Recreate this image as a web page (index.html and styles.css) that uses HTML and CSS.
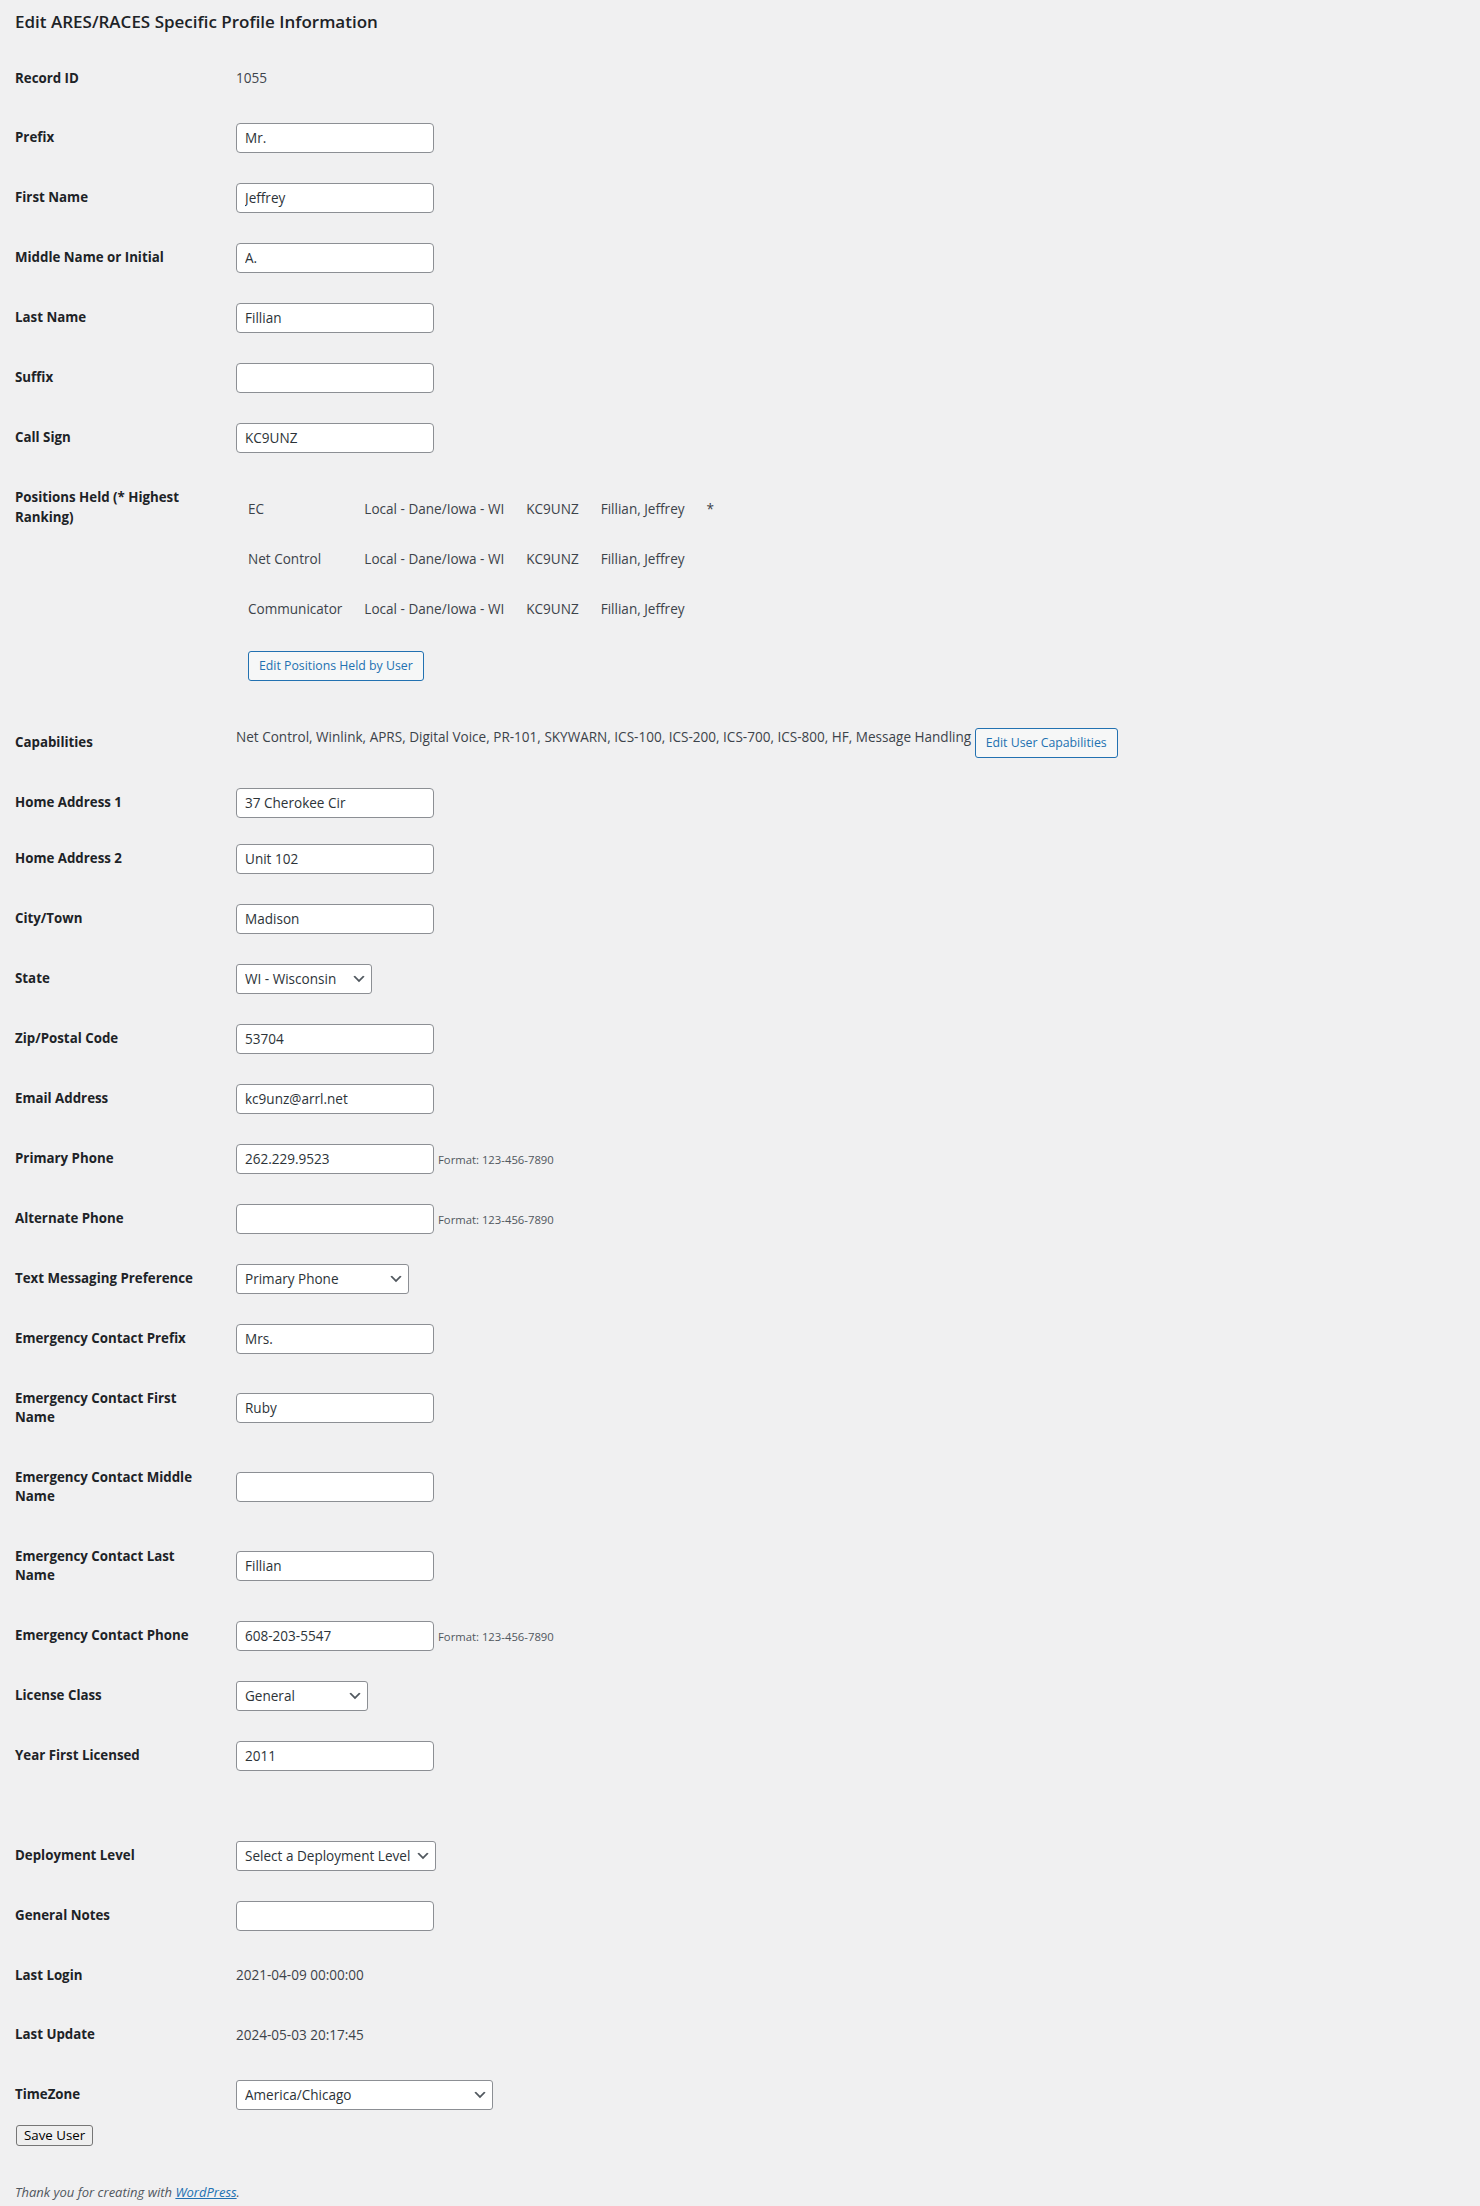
FILE: index.html
```html
<!DOCTYPE html>
<html lang="en">
<head>
<meta charset="utf-8">
<title>Edit ARES/RACES Specific Profile Information</title>
<link rel="stylesheet" href="styles.css">
</head>
<body>
<div class="wrap">
  <h2 class="page-title">Edit ARES/RACES Specific Profile Information</h2>
  <form>
  <table class="form-table">
    <tbody>
      <tr><th>Record ID</th><td>1055</td></tr>
      <tr><th>Prefix</th><td><input class="text-input" type="text" value="Mr."></td></tr>
      <tr><th>First Name</th><td><input class="text-input" type="text" value="Jeffrey"></td></tr>
      <tr><th>Middle Name or Initial</th><td><input class="text-input" type="text" value="A."></td></tr>
      <tr><th>Last Name</th><td><input class="text-input" type="text" value="Fillian"></td></tr>
      <tr><th>Suffix</th><td><input class="text-input" type="text" value=""></td></tr>
      <tr><th>Call Sign</th><td><input class="text-input" type="text" value="KC9UNZ"></td></tr>
      <tr>
        <th>Positions Held (* Highest Ranking)</th>
        <td>
          <table class="positions">
            <tbody>
              <tr><td>EC</td><td>Local - Dane/Iowa - WI</td><td>KC9UNZ</td><td>Fillian, Jeffrey</td><td>*</td></tr>
              <tr><td>Net Control</td><td>Local - Dane/Iowa - WI</td><td>KC9UNZ</td><td>Fillian, Jeffrey</td><td></td></tr>
              <tr><td>Communicator</td><td>Local - Dane/Iowa - WI</td><td>KC9UNZ</td><td>Fillian, Jeffrey</td><td></td></tr>
              <tr><td colspan="5"><button type="button" class="button">Edit Positions Held by User</button></td></tr>
            </tbody>
          </table>
        </td>
      </tr>
      <tr><th>Capabilities</th><td>Net Control, Winlink, APRS, Digital Voice, PR-101, SKYWARN, ICS-100, ICS-200, ICS-700, ICS-800, HF, Message Handling <button type="button" class="button">Edit User Capabilities</button></td></tr>
      <tr class="row-short"><th>Home Address 1</th><td><input class="text-input" type="text" value="37 Cherokee Cir"></td></tr>
      <tr><th>Home Address 2</th><td><input class="text-input" type="text" value="Unit 102"></td></tr>
      <tr><th>City/Town</th><td><input class="text-input" type="text" value="Madison"></td></tr>
      <tr><th>State</th><td><span class="select-wrap"><select class="select sel-state"><option>WI - Wisconsin</option></select><svg class="chev" viewBox="0 0 20 20" aria-hidden="true"><path d="M5 6l5 5 5-5 2 1-7 7-7-7 2-1z"/></svg></span></td></tr>
      <tr><th>Zip/Postal Code</th><td><input class="text-input" type="text" value="53704"></td></tr>
      <tr><th>Email Address</th><td><input class="text-input" type="text" value="kc9unz@arrl.net"></td></tr>
      <tr><th>Primary Phone</th><td><input class="text-input" type="text" value="262.229.9523"><span class="hint">Format: 123-456-7890</span></td></tr>
      <tr><th>Alternate Phone</th><td><input class="text-input" type="text" value=""><span class="hint">Format: 123-456-7890</span></td></tr>
      <tr><th>Text Messaging Preference</th><td><span class="select-wrap"><select class="select sel-text"><option>Primary Phone</option><option>Alternate Phone</option></select><svg class="chev" viewBox="0 0 20 20" aria-hidden="true"><path d="M5 6l5 5 5-5 2 1-7 7-7-7 2-1z"/></svg></span></td></tr>
      <tr><th>Emergency Contact Prefix</th><td><input class="text-input" type="text" value="Mrs."></td></tr>
      <tr><th>Emergency Contact First Name</th><td><input class="text-input" type="text" value="Ruby"></td></tr>
      <tr><th>Emergency Contact Middle Name</th><td><input class="text-input" type="text" value=""></td></tr>
      <tr><th>Emergency Contact Last Name</th><td><input class="text-input" type="text" value="Fillian"></td></tr>
      <tr><th>Emergency Contact Phone</th><td><input class="text-input" type="text" value="608-203-5547"><span class="hint">Format: 123-456-7890</span></td></tr>
      <tr><th>License Class</th><td><span class="select-wrap"><select class="select sel-license"><option>General</option><option>Technician</option><option>Extra</option></select><svg class="chev" viewBox="0 0 20 20" aria-hidden="true"><path d="M5 6l5 5 5-5 2 1-7 7-7-7 2-1z"/></svg></span></td></tr>
      <tr><th>Year First Licensed</th><td><input class="text-input" type="text" value="2011"></td></tr>
      <tr class="spacer"><th></th><td></td></tr>
      <tr><th>Deployment Level</th><td><span class="select-wrap"><select class="select sel-deploy"><option>Select a Deployment Level</option></select><svg class="chev" viewBox="0 0 20 20" aria-hidden="true"><path d="M5 6l5 5 5-5 2 1-7 7-7-7 2-1z"/></svg></span></td></tr>
      <tr><th>General Notes</th><td><input class="text-input" type="text" value=""></td></tr>
      <tr><th>Last Login</th><td>2021-04-09 00:00:00</td></tr>
      <tr><th>Last Update</th><td>2024-05-03 20:17:45</td></tr>
      <tr><th>TimeZone</th><td><span class="select-wrap"><select class="select sel-tz"><option>America/Chicago</option></select><svg class="chev" viewBox="0 0 20 20" aria-hidden="true"><path d="M5 6l5 5 5-5 2 1-7 7-7-7 2-1z"/></svg></span></td></tr>
    </tbody>
  </table>
  <input class="save-btn" type="submit" value="Save User">
  </form>
  <p class="footer">Thank you for creating with <a href="#">WordPress</a>.</p>
</div>
</body>
</html>
```
FILE: styles.css
```css
html, body {
  margin: 0;
  padding: 0;
}

body {
  background: #f0f0f1;
  color: #3c434a;
  font-family: "Open Sans", "Noto Sans", sans-serif;
  font-size: 13.55px;
  line-height: 1.4;
}

.wrap {
  padding: 0 15px;
}

.page-title {
  margin: 10px 0 14.5px;
  font-size: 17px;
  line-height: 24px;
  font-weight: 600;
  color: #1d2327;
}

.form-table {
  border-collapse: collapse;
  border-spacing: 0;
}

.form-table > tbody > tr > th {
  vertical-align: top;
  text-align: left;
  width: 194px;
  padding: 20px 17px 20px 0;
  font-size: 13.3px;
  line-height: 19.5px;
  font-weight: 700;
  color: #1d2327;
}

.form-table > tbody > tr > td {
  vertical-align: middle;
  padding: 15px 10px;
  line-height: 18.2px;
}

.form-table > tbody > tr.row-short > th {
  padding-bottom: 16.5px;
}

.form-table > tbody > tr.row-short > td {
  padding-bottom: 11px;
}

.positions {
  border-collapse: separate;
  border-spacing: 2px;
}

.positions td {
  padding: 15px 10px;
  line-height: 18.2px;
  vertical-align: middle;
  white-space: nowrap;
}

.text-input {
  box-sizing: border-box;
  width: 198px;
  height: 30px;
  margin: 0;
  padding: 0 8px;
  border: 1px solid #8c8f94;
  border-radius: 4px;
  background: #fff;
  color: #2c3338;
  font-family: "Open Sans", "Noto Sans", sans-serif;
  font-size: 13.55px;
  line-height: 28px;
  outline: none;
}

.hint {
  margin-left: 4px;
  font-size: 11.3px;
  color: #50575e;
}

.select-wrap {
  position: relative;
  display: inline-block;
}

.select {
  box-sizing: border-box;
  -webkit-appearance: none;
  appearance: none;
  height: 30px;
  margin: 0;
  padding: 0 24px 0 8px;
  border: 1px solid #8c8f94;
  border-radius: 3px;
  background: #fff;
  color: #2c3338;
  font-family: "Open Sans", "Noto Sans", sans-serif;
  font-size: 13.55px;
  line-height: 28px;
  outline: none;
}

.sel-state { width: 136px; }
.sel-text { width: 173px; }
.sel-license { width: 132px; }
.sel-deploy { width: 200px; }
.sel-tz { width: 257px; }

.chev {
  position: absolute;
  right: 5px;
  top: 50%;
  width: 16px;
  height: 16px;
  margin-top: -7.5px;
  fill: #50575e;
  pointer-events: none;
}

.button {
  display: inline-block;
  box-sizing: border-box;
  height: 30px;
  margin: 0;
  padding: 0 10px;
  border: 1px solid #2271b1;
  border-radius: 3px;
  background: #f6f7f7;
  color: #2271b1;
  font-family: "Open Sans", "Noto Sans", sans-serif;
  font-size: 12.3px;
  line-height: 28px;
  vertical-align: top;
  white-space: nowrap;
  cursor: pointer;
}

.save-btn {
  display: block;
  box-sizing: border-box;
  height: 21.4px;
  margin: 0 0 0 1px;
  padding: 0 7px;
  border: 1px solid #767676;
  border-radius: 3px;
  background: #efefef;
  color: #000;
  font-family: "Open Sans", "Noto Sans", sans-serif;
  font-size: 13.3px;
  line-height: 19.4px;
}

.footer {
  margin: 37px 0 0;
  font-size: 13px;
  line-height: 18.2px;
  font-style: italic;
  color: #50575e;
}

.footer a {
  color: #2271b1;
  text-decoration: underline;
}
```
